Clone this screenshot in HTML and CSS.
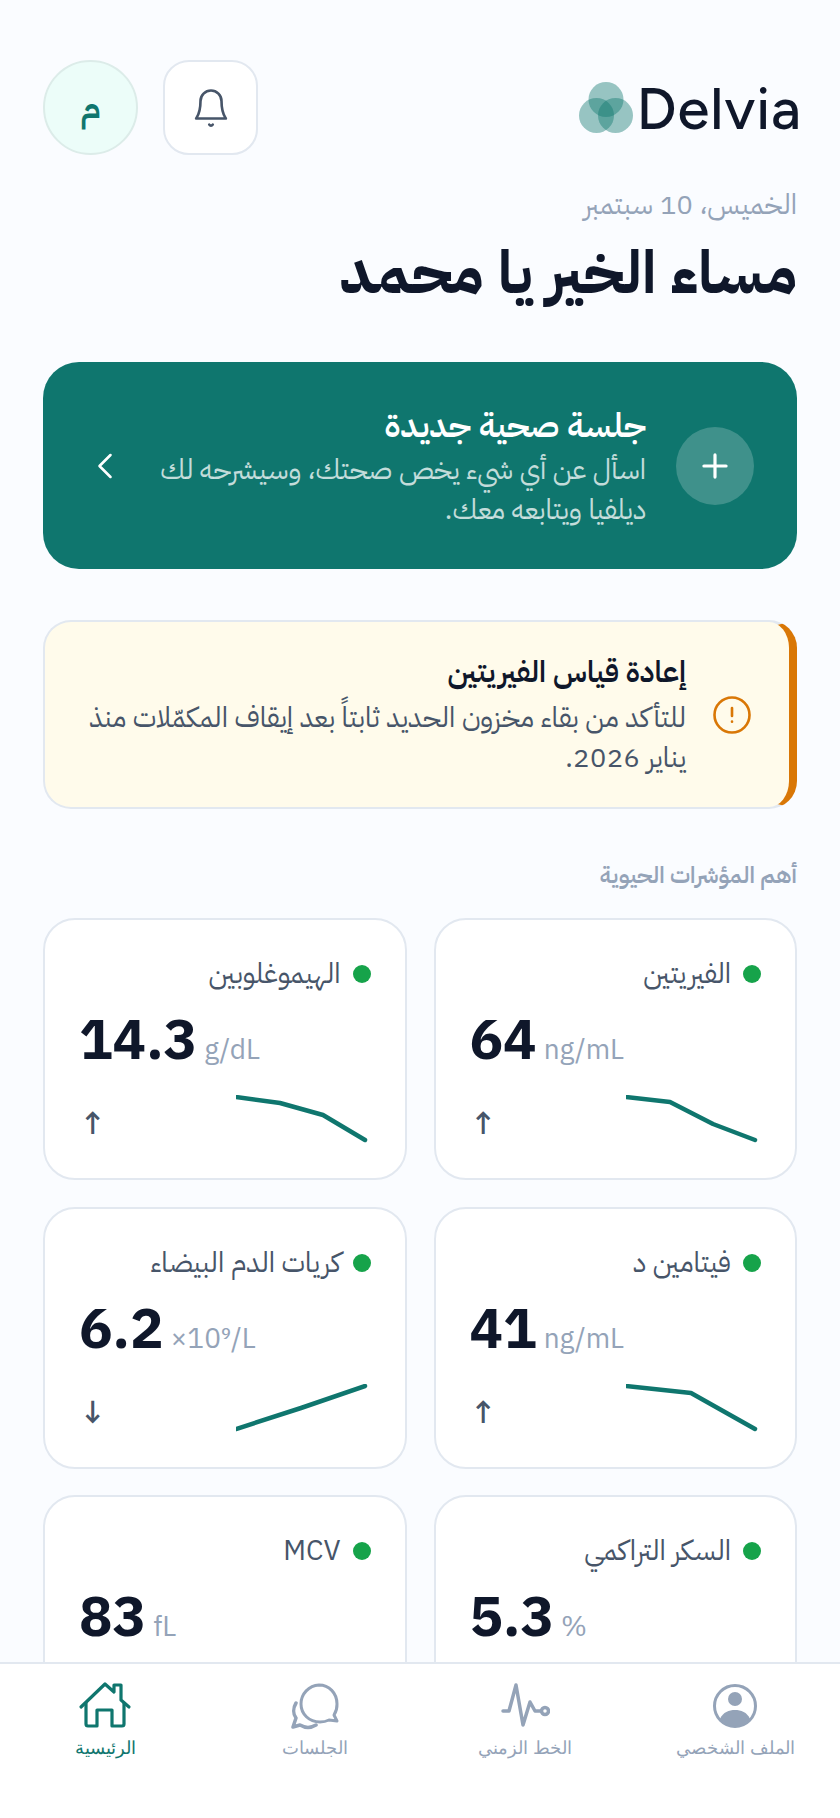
FILE: index.html
```html
<!DOCTYPE html>
<html lang="ar" dir="rtl">
<head><meta charset="utf-8"><title>Delvia</title><link rel="stylesheet" href="styles.css"></head>
<body>
<div class="app">
<header class="top">
  <div class="logo"><span class="logo-text" dir="ltr">Delvia</span>
    <svg class="logo-mark" width="54" height="51" viewBox="0 0 54 51"><circle cx="27" cy="17.500" r="17.500" fill="#0f766e" fill-opacity=".42"/><circle cx="17.500" cy="33.500" r="17.500" fill="#0f766e" fill-opacity=".42"/><circle cx="36.500" cy="33.500" r="17.500" fill="#0f766e" fill-opacity=".42"/></svg>
  </div>
  <div class="top-actions">
    <button class="icon-btn"><svg width="42" height="42" viewBox="0 0 24 24" fill="none" stroke="#475569" stroke-width="1.500" stroke-linecap="round" stroke-linejoin="round"><path d="M6 8a6 6 0 0 1 12 0c0 7 2 9 2.500 10H3.500C4 17 6 15 6 8"/><path d="M11 21.500a1.200 1.200 0 0 0 2 0"/></svg></button>
    <div class="avatar">م</div>
  </div>
</header>
<p class="date">الخميس، 10 سبتمبر</p>
<h1 class="greet">مساء الخير يا محمد</h1>
<section class="cta">
  <div class="cta-plus"><svg width="38" height="38" viewBox="0 0 24 24" fill="none" stroke="#fff" stroke-width="2" stroke-linecap="round"><path d="M5 12h14M12 5v14"/></svg></div>
  <div class="cta-body"><h2>جلسة صحية جديدة</h2><p>اسأل عن أي شيء يخص صحتك، وسيشرحه لك ديلفيا ويتابعه معك.</p></div>
  <svg class="cta-chev" width="44" height="44" viewBox="0 0 24 24" fill="none" stroke="#fff" stroke-width="1.400" stroke-linecap="round" stroke-linejoin="round"><path d="m15 18-6-6 6-6"/></svg>
</section>
<section class="alert">
  <svg class="alert-icon" width="42" height="42" viewBox="0 0 24 24" fill="none" stroke="#d97706" stroke-width="1.500" stroke-linecap="round"><circle cx="12" cy="12" r="10"/><path d="M12 8v4.500M12 15.800h.01"/></svg>
  <div class="alert-body"><h3>إعادة قياس الفيريتين</h3><p>للتأكد من بقاء مخزون الحديد ثابتاً بعد إيقاف المكمّلات منذ يناير 2026.</p></div>
</section>
<h4 class="sec">أهم المؤشرات الحيوية</h4>
<div class="grid">
  <article class="card"><div class="lbl"><i class="dot"></i>الفيريتين</div><div class="val" dir="ltr"><b>64</b><span>ng/mL</span></div><div class="foot"><span class="arr">↑</span><svg class="spark" width="132" height="48" viewBox="0 0 132 48"><path d="M0 2 44 7 87 29 129 45"/></svg></div></article>
  <article class="card"><div class="lbl"><i class="dot"></i>الهيموغلوبين</div><div class="val" dir="ltr"><b>14.3</b><span>g/dL</span></div><div class="foot"><span class="arr">↑</span><svg class="spark" width="132" height="48" viewBox="0 0 132 48"><path d="M0 2 44 8 87 20 129 45"/></svg></div></article>
  <article class="card"><div class="lbl"><i class="dot"></i>فيتامين د</div><div class="val" dir="ltr"><b>41</b><span>ng/mL</span></div><div class="foot"><span class="arr">↑</span><svg class="spark" width="132" height="48" viewBox="0 0 132 48"><path d="M0 2 65 9 129 45"/></svg></div></article>
  <article class="card"><div class="lbl"><i class="dot"></i>كريات الدم البيضاء</div><div class="val" dir="ltr"><b>6.2</b><span>×10⁹/L</span></div><div class="foot"><span class="arr">↓</span><svg class="spark" width="132" height="48" viewBox="0 0 132 48"><path d="M0 45 65 24 129 2"/></svg></div></article>
  <article class="card"><div class="lbl"><i class="dot"></i>السكر التراكمي</div><div class="val" dir="ltr"><b>5.3</b><span>%</span></div><div class="foot"><span class="arr">↑</span></div></article>
  <article class="card"><div class="lbl"><i class="dot"></i>MCV</div><div class="val" dir="ltr"><b>83</b><span>fL</span></div><div class="foot"><span class="arr">↑</span></div></article>
</div>
</div>
<nav class="tabs">
  <a class="tab"><svg width="50" height="50" viewBox="0 0 50 50"><circle cx="25" cy="25" r="20.500" fill="none" stroke="#94a3b8" stroke-width="3"/><circle cx="25" cy="18" r="7" fill="#94a3b8"/><path d="M10 38c3-7 9-9 15-9s12 2 15 9c-4 4-9 7-15 7s-11-3-15-7z" fill="#94a3b8"/></svg><span>الملف الشخصي</span></a>
  <a class="tab"><svg width="50" height="50" viewBox="0 0 50 50" fill="none" stroke="#94a3b8" stroke-width="3.500" stroke-linecap="round" stroke-linejoin="round"><path d="M3 30h6l7-26 7 40 7-23 5 9h6"/><circle cx="45" cy="30" r="3.500"/></svg><span>الخط الزمني</span></a>
  <a class="tab"><svg width="50" height="50" viewBox="0 0 50 50" fill="none" stroke="#94a3b8" stroke-width="3" stroke-linecap="round" stroke-linejoin="round"><path d="M29 4a19 19 0 0 0-18 19c0 10 8 18 19 18 4 0 7-1 9-2l8 1-3-6a19 19 0 0 0 3-11C47 12 39 4 29 4z"/><path d="M6 22c-3 5-3 11 0 15l-3 9 7-2c5 3 11 3 16 0" stroke-width="3.500"/></svg><span>الجلسات</span></a>
  <a class="tab active"><svg width="54" height="50" viewBox="0 0 54 50" fill="none" stroke="#0f766e" stroke-width="3.200" stroke-linecap="round" stroke-linejoin="round"><path d="M3 26 27 3l9 8V4h7v15l8 7"/><path d="M8 22v21a2 2 0 0 0 2 2h9V29h15v16h10a2 2 0 0 0 2-2V22"/></svg><span>الرئيسية</span></a>
</nav>
</body>
</html>
```
FILE: styles.css
```css
*{box-sizing:border-box}
html,body{margin:0}
body{background:#fafcff;font-family:"IBM Plex Sans Arabic","Noto Sans",sans-serif;color:#0f172a;overflow:hidden;height:1818px;position:relative}
.app{padding:60px 43px 0;height:1818px;overflow:hidden}
.top{display:flex;justify-content:space-between;align-items:center;height:95px}
.logo{display:flex;align-items:center;gap:3px}
.logo-text{font-size:58px;font-family:"Figtree","Nunito","Lato",sans-serif;font-weight:500;color:#0f172a;line-height:1;letter-spacing:1px;margin-right:-5px;margin-top:3px}
.top-actions{display:flex;gap:25px;align-items:center}
.icon-btn{width:95px;height:95px;border-radius:26px;border:2px solid #e2e8f0;background:#fff;display:flex;align-items:center;justify-content:center;padding:0}
.avatar{width:95px;height:95px;border-radius:50%;border:2px solid #dcece9;background:#ecfdf9;color:#0f766e;display:flex;align-items:center;justify-content:center;font-size:34px;font-weight:600}
.date{margin:30px 0 0;font-size:28px;color:#94a3b8;line-height:40px}
.greet{margin:12px 0 0;font-size:60px;font-weight:700;line-height:72px}
.cta{margin-top:53px;background:#0f766e;border-radius:36px;height:207px;display:flex;align-items:center;padding:0 43px 0 40px;color:#fff;gap:30px}
.cta-plus{width:78px;height:78px;border-radius:50%;background:rgba(255,255,255,.2);display:flex;align-items:center;justify-content:center;flex:none}
.cta-body{flex:1}
.cta-body h2{margin:0;font-size:33.700px;font-weight:600;line-height:48px}
.cta-body p{margin:0;font-size:28px;line-height:40px;color:rgba(255,255,255,.75);max-width:500px}
.cta-chev{flex:none;margin-right:-16px}
.alert{margin-top:51px;height:189px;background:#fffbeb;border:2px solid #e2e8f0;border-right:8px solid #d97706;border-radius:28px;display:flex;align-items:center;padding:0 36px 0 28px;gap:25px}
.alert-icon{flex:none}
.alert-body{flex:1}
.alert-body h3{margin:0 0 5px;font-size:29.700px;font-weight:600;line-height:42px}
.alert-body p{margin:0;font-size:28px;line-height:40px;color:#475569}
.sec{margin:49px 0 0;font-size:23px;font-weight:600;color:#94a3b8;line-height:36px}
.grid{margin-top:24px;display:grid;grid-template-columns:1fr 1fr;gap:26.500px 27px}
.card{background:#fff;border:2px solid #e2e8f0;border-radius:32px;height:262px;padding:36px 34px 0}
.lbl{display:flex;align-items:center;gap:12px;font-size:28px;color:#475569;line-height:36px}
.dot{width:18px;height:18px;border-radius:50%;background:#16a34a;flex:none}
.val{margin-top:10px;display:flex;align-items:baseline;gap:7px}
.val b{font-size:56px;font-weight:700;line-height:76px;color:#0f172a}
.val span{font-size:28px;color:#94a3b8}
.foot{margin-top:13px;display:flex;align-items:center;justify-content:space-between;direction:ltr}
.arr{font-size:32px;font-weight:500;color:#475569;line-height:48px;margin-top:8px}
.spark{fill:none;stroke:#0f766e;stroke-width:4.500;stroke-linecap:round;stroke-linejoin:round;margin-right:3px}
.tabs{position:absolute;left:0;right:0;bottom:0;height:156px;background:#fff;border-top:2px solid #e2e8f0;display:grid;grid-template-columns:repeat(4,1fr);padding-top:17px}
.tab{display:flex;flex-direction:column;align-items:center;color:#94a3b8;font-size:18px;font-family:Arial,"Liberation Sans",sans-serif;gap:6px}
.tab.active{color:#0f766e}
```
